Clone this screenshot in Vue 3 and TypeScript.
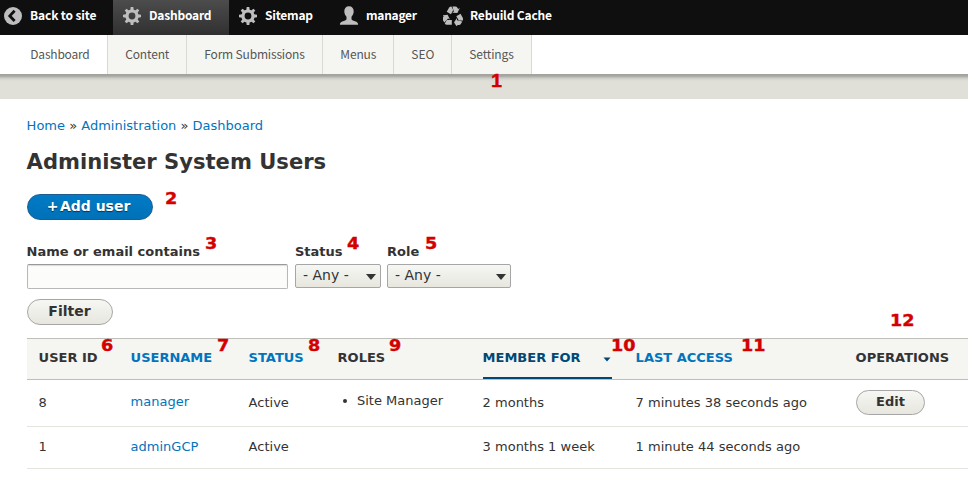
<script setup lang="ts">
interface ToolItem { label: string; icon: 'back' | 'gear' | 'user' | 'recycle'; width: number; text: number; active?: boolean }
interface Tab { label: string; width: number; text: number; active?: boolean }
interface Mark { n: number; x: number; y: number }

const tools: ToolItem[] = [
  { label: 'Back to site', icon: 'back', width: 113, text: 66.5 },
  { label: 'Dashboard', icon: 'gear', width: 116, text: 62.5, active: true },
  { label: 'Sitemap', icon: 'gear', width: 101, text: 48 },
  { label: 'manager', icon: 'user', width: 104, text: 51 },
  { label: 'Rebuild Cache', icon: 'recycle', width: 134, text: 82 },
]
const tabs: Tab[] = [
  { label: 'Dashboard', width: 108, text: 59.5, active: true },
  { label: 'Content', width: 79, text: 44 },
  { label: 'Form Submissions', width: 136, text: 100.5 },
  { label: 'Menus', width: 71, text: 36 },
  { label: 'SEO', width: 58, text: 23 },
  { label: 'Settings', width: 80, text: 44.5 },
]
const marks: Mark[] = [
  { n: 1, x: 490.5, y: 71 }, { n: 2, x: 165, y: 189 }, { n: 3, x: 205, y: 234 },
  { n: 4, x: 347, y: 234 }, { n: 5, x: 425, y: 234 }, { n: 6, x: 101, y: 336 },
  { n: 7, x: 217, y: 336 }, { n: 8, x: 308, y: 336 }, { n: 9, x: 389, y: 336 },
  { n: 10, x: 611, y: 336 }, { n: 11, x: 741, y: 336 }, { n: 12, x: 890, y: 311 },
]
const teeth = [0, 45, 90, 135, 180, 225, 270, 315]
const thirds = [0, 120, 240]
const users = [
  { id: 8, name: 'manager', status: 'Active', role: 'Site Manager', member: '2 months', access: '7 minutes 38 seconds ago', edit: true },
  { id: 1, name: 'adminGCP', status: 'Active', role: '', member: '3 months 1 week', access: '1 minute 44 seconds ago', edit: false },
]
</script>

<template>
  <div class="page">
    <nav class="toolbar">
      <a v-for="t in tools" :key="t.label" class="tool" :class="[t.icon, { active: t.active }]" :style="{ width: t.width + 'px' }">
        <svg class="icon" viewBox="0 0 20 20">
          <template v-if="t.icon === 'back'">
            <circle cx="10" cy="10" r="9" fill="#bebebe" />
            <path d="M11.6 4.8 6.8 9.9l4.8 5.1" fill="none" stroke="#0f0f0f" stroke-width="2.8" />
          </template>
          <template v-else-if="t.icon === 'gear'">
            <circle cx="10" cy="10" r="5" fill="none" stroke="#bebebe" stroke-width="3.2" />
            <path v-for="a in teeth" :key="a" d="M8.3 4.2 8.7 1h2.6l.4 3.2z" fill="#bebebe" :transform="`rotate(${a} 10 10)`" />
          </template>
          <path v-else-if="t.icon === 'user'" d="M10 .2c3 0 4.7 2 4.7 5 0 2-.8 4.2-2.2 5.5v2.3c0 1.2 1.4 1.7 3.5 2.3 2.1.6 3 1.4 3.1 3.4H.9c.1-2 1-2.8 3.1-3.4 2.1-.6 3.5-1.1 3.5-2.3v-2.3C6.1 9.4 5.3 7.2 5.3 5.2c0-3 1.7-5 4.7-5z" fill="#bebebe" />
          <template v-else>
            <g v-for="a in thirds" :key="a" :transform="`rotate(${a} 10 10.8)`" fill="#bebebe">
              <path d="M3.7 5.8 6.2 1.4Q6.9.3 8.4.4L10.3 3.9 7.9 8.2z" />
              <path d="M9.4.4h3q1.2 0 1.8 1.1l.9 1.5 1.7-.9-2.4 5-5.3-.3 1.8-1.1z" />
            </g>
          </template>
        </svg>
        <svg class="label" :width="t.text + 2" height="35"><text x="0" y="20" :textLength="t.text">{{ t.label }}</text></svg>
      </a>
    </nav>
    <nav class="tabs">
      <a v-for="t in tabs" :key="t.label" class="tab" :class="{ active: t.active }" :style="{ width: t.width + 'px' }">
        <svg class="label" :width="t.text + 2" height="39"><text x="0" y="24" :textLength="t.text">{{ t.label }}</text></svg>
      </a>
    </nav>
    <div class="band"></div>
    <main>
      <div class="crumbs"><a>Home</a> » <a>Administration</a> » <a>Dashboard</a></div>
      <h1>Administer System Users</h1>
      <button class="btn primary"><span class="plus">+</span>Add user</button>
      <form class="filters">
        <label>Name or email contains<input type="text"></label>
        <label>Status<span class="select s1">- Any -<svg viewBox="0 0 10 7"><path d="M0 0h10L5 6z" /></svg></span></label>
        <label>Role<span class="select s2">- Any -<svg viewBox="0 0 10 7"><path d="M0 0h10L5 6z" /></svg></span></label>
      </form>
      <button class="btn filter">Filter</button>
      <div class="table">
        <div class="row head">
          <span>USER ID</span><a>USERNAME</a><a>STATUS</a><span>ROLES</span>
          <a class="sorted">MEMBER FOR<svg viewBox="0 0 8 5"><path d="M.5.5h7L4 4.5z" /></svg></a>
          <a>LAST ACCESS</a><span>OPERATIONS</span>
        </div>
        <div v-for="(u, i) in users" :key="u.id" class="row" :class="i ? 'second' : 'first'">
          <span>{{ u.id }}</span><a>{{ u.name }}</a><span>{{ u.status }}</span>
          <span class="role"><template v-if="u.role"><i class="dot"></i>{{ u.role }}</template></span>
          <span>{{ u.member }}</span><span>{{ u.access }}</span>
          <span><button v-if="u.edit" class="btn edit">Edit</button></span>
        </div>
      </div>
    </main>
    <b v-for="m in marks" :key="m.n" class="mark" :class="{ narrow: m.n === 1 }" :style="{ left: m.x + 'px', top: m.y + 'px' }">{{ m.n }}</b>
  </div>
</template>

<style>
body { background: #fff; }
</style>
<style scoped>
* { box-sizing: border-box; }
.page { position: relative; width: 968px; height: 496px; overflow: hidden; background: #fff; color: #333; font: 13px/20px "DejaVu Sans", sans-serif; }
.toolbar { display: flex; height: 35px; background: #0f0f0f; }
.tool { display: flex; padding-left: 9px; }
.tool.back { padding-left: 3px; }
.tool.active { background: linear-gradient(#4c4c4c, #303030); }
.icon { width: 20px; height: 20px; margin-top: 6px; flex: none; }
.label { display: block; flex: none; overflow: visible; font: 12px "Noto Sans CJK SC", sans-serif; }
.tool .label { margin-left: 7px; fill: #fff; font-weight: 700; }
.tabs { display: flex; height: 39px; background: #fff; }
.tab { padding-left: 17px; background: #f5f5f2; border-right: 1px solid #d8d8d4; }
.tab text { transform: translateX(.3px); }
.tab.active { padding-left: 30px; background: #fff; }
.tab .label { fill: #565656; }
.band { height: 25px; background: linear-gradient(#a1a19d 0, #a6a6a2 2px, #cacac4 4px, #dbdbd4 6px, #e0e0d8 8px); }
main { padding-left: 27px; }
a { color: #0074bd; }
.crumbs { margin: 17px 0 0 -.4px; height: 20px; }
h1 { margin: 12px 0 0 -.4px; height: 28px; font-size: 21.08px; line-height: 28px; }
.btn { display: block; padding: 0 0 2px; border: 1px solid #a6a6a6; border-radius: 20px; background: linear-gradient(#f6f6f3, #e7e7df); color: #333; font: bold 14px/22px "DejaVu Sans", sans-serif; text-align: center; }
.primary { width: 126px; height: 26px; margin-top: 18px; padding-right: 3px; border-color: #1e5c90; background: linear-gradient(#007bc6, #0071b8); color: #fff; text-shadow: 0 1px 1px #0008; }
.plus { margin-right: 1.5px; }
.filters { display: flex; gap: 6px; margin-top: 22px; height: 47px; }
.filters label { font-weight: 700; white-space: nowrap; }
.filters label:first-child { margin-right: 1px; text-indent: -.4px; }
input { display: block; width: 261px; height: 25px; margin-top: 2px; border: 1px solid #b8b8b8; border-top-color: #999; border-radius: 2px; background: #fcfcfa; box-shadow: inset 0 1px 1px #0002; }
.select { display: flex; justify-content: space-between; height: 24px; margin-top: 2px; padding: 0 4px 0 7px; border: 1px solid #a6a6a6; border-radius: 2px; background: linear-gradient(#f6f6f3, #e7e7df); font-size: 14px; line-height: 20px; font-weight: 400; }
.select svg { width: 10px; height: 7px; margin-top: 9px; fill: #333; }
.s1 { width: 86px; }
.s2 { width: 124px; }
.filter { width: 86px; height: 26px; margin-top: 10px; padding-right: 1px; }
.table { width: 941px; margin-top: 13px; }
.row { display: grid; grid-template-columns: 92px 118px 89px 145px 153px 220px 112px; padding-left: 12px; border-bottom: 1px solid #e6e4df; white-space: nowrap; }
.row > * { text-indent: -.4px; }
.head { height: 42px; border-top: 1px solid #bfbfba; border-bottom-color: #bfbfba; background: #f5f5f2; font-weight: 700; line-height: 37px; }
.sorted { display: flex; justify-content: space-between; width: 129px; height: 40px; border-bottom: 2px solid #004875; color: #004875; }
.sorted svg { width: 8px; height: 5px; margin: 18px 1px 0 0; fill: #004875; }
.first { height: 47px; line-height: 46px; }
.first > a { line-height: 44px; }
.first .role { line-height: 42px; }
.second { height: 42px; line-height: 40px; }
.dot { display: inline-block; width: 4px; height: 4px; margin: 0 10px 2px 5.4px; border-radius: 50%; background: #333; }
.edit { width: 69px; height: 25px; margin-top: 10px; font-size: 13px; line-height: 21px; }
.mark { position: absolute; color: #d40000; font: bold 16px/20px "DejaVu Sans", sans-serif; -webkit-text-stroke: .4px #d40000; transform: scaleX(1.1); transform-origin: 0 0; }
.narrow { font: bold 18px/20px "Liberation Sans", sans-serif; }
</style>
